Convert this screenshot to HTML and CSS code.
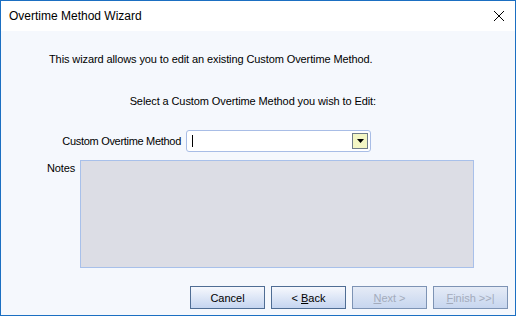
FILE: index.html
```html
<!DOCTYPE html>
<html>
<head>
<meta charset="utf-8">
<link rel="stylesheet" href="styles.css">
</head>
<body>
<div class="window">
  <div class="titlebar">
    <span class="title">Overtime Method Wizard</span>
    <span class="close">
      <svg width="12" height="12" viewBox="0 0 12 12"><path d="M1 1L11 11M11 1L1 11" stroke="#000" stroke-width="1" fill="none"/></svg>
    </span>
  </div>
  <div class="content">
    <p class="intro">This wizard allows you to edit an existing Custom Overtime Method.</p>
    <p class="prompt">Select a Custom Overtime Method you wish to Edit:</p>
    <div class="field-row">
      <label class="field-label">Custom Overtime Method</label>
      <div class="combo">
        <span class="caret"></span>
        <span class="drop"><svg width="7" height="4" viewBox="0 0 7 4"><path d="M0 0H7L3.5 4Z" fill="#000"/></svg></span>
      </div>
    </div>
    <div class="notes-row">
      <label class="notes-label">Notes</label>
      <div class="notes"></div>
    </div>
    <div class="buttons">
      <button class="btn">Cancel</button>
      <button class="btn">&lt; <u>B</u>ack</button>
      <button class="btn disabled"><u>N</u>ext &gt;</button>
      <button class="btn disabled"><u>F</u>inish &gt;&gt;|</button>
    </div>
  </div>
</div>
</body>
</html>
```

FILE: styles.css
```css
html, body {
  margin: 0;
  padding: 0;
  background: #ffffff;
}
.window {
  width: 516px;
  height: 316px;
  box-sizing: border-box;
  border: 1px solid #1b6fc2;
  display: flex;
  flex-direction: column;
  font-family: "Liberation Sans", Arial, sans-serif;
  font-size: 11px;
  color: #000;
}
.titlebar {
  height: 30px;
  background: #ffffff;
  display: flex;
  align-items: center;
  justify-content: space-between;
  padding: 0 10px 0 8px;
}
.title {
  font-family: "Liberation Sans", Arial, sans-serif;
  font-size: 12px;
  color: #000;
}
.close {
  display: flex;
  width: 12px;
  height: 12px;
}
.content {
  flex: 1;
  background: #f5f8fd;
  display: flex;
  flex-direction: column;
  letter-spacing: -0.1px;
}
.intro {
  margin: 22px 0 0 48px;
  line-height: 13px;
}
.prompt {
  margin: 29px 0 0 0;
  width: 375px;
  text-align: right;
  line-height: 13px;
}
.field-row {
  display: flex;
  align-items: center;
  margin-top: 22px;
  height: 22px;
}
.field-label {
  width: 185px;
  text-align: right;
  padding-right: 5px;
  box-sizing: border-box;
  letter-spacing: -0.3px;
}
.combo {
  width: 185px;
  height: 22px;
  box-sizing: border-box;
  border: 1px solid #a8bde6;
  border-radius: 3px;
  background: #ffffff;
  display: flex;
  align-items: center;
  justify-content: space-between;
  padding: 0 2px 0 5px;
}
.caret {
  width: 1px;
  height: 12px;
  background: #000;
}
.drop {
  width: 16px;
  height: 16px;
  box-sizing: border-box;
  border: 1px solid #6f7c88;
  background: #f3f6c4;
  display: flex;
  align-items: center;
  justify-content: center;
}
.notes-row {
  display: flex;
  margin-top: 8px;
}
.notes-label {
  width: 79px;
  padding-left: 46px;
  box-sizing: border-box;
  line-height: 13px;
  padding-top: 2px;
}
.notes {
  width: 394px;
  height: 108px;
  box-sizing: border-box;
  background: #dcdde5;
  border: 1px solid #a8c0ea;
}
.buttons {
  display: flex;
  justify-content: flex-end;
  gap: 6px;
  margin-top: 18px;
  padding-right: 7px;
}
.btn {
  width: 75px;
  height: 23px;
  box-sizing: border-box;
  border: 1px solid #4f6d94;
  background: linear-gradient(#f6f8fd, #c5d5f0);
  font-family: "Liberation Sans", Arial, sans-serif;
  font-size: 11px;
  color: #000;
  padding: 0;
}
.btn.disabled {
  color: #a3abbb;
  border-color: #7d93b4;
  background: linear-gradient(#e5ebf6, #c7d6ef);
}
```
